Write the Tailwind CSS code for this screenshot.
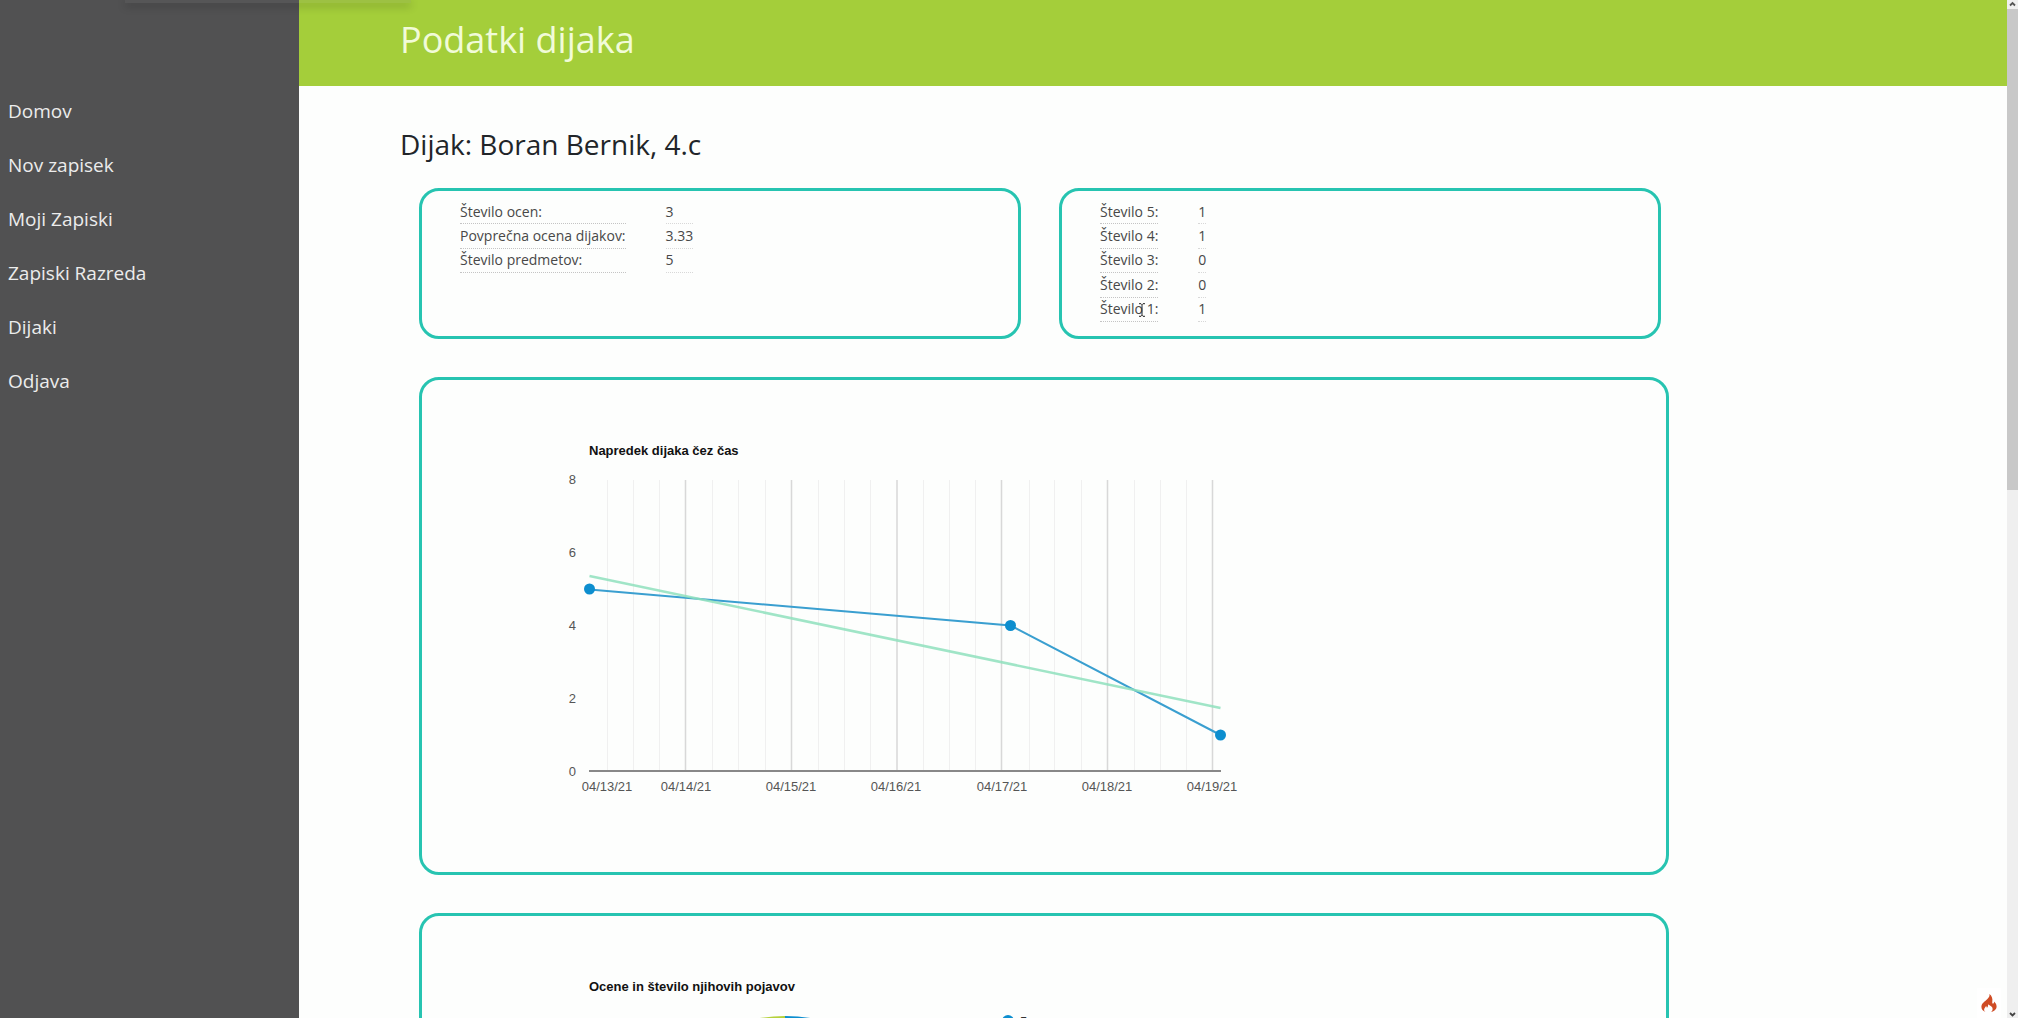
<!DOCTYPE html>
<html lang="sl">
<head>
<meta charset="utf-8">
<title>Podatki dijaka</title>
<script src="https://cdn.jsdelivr.net/npm/@tailwindcss/browser@4"></script>
</head>
<body class="h-screen overflow-hidden bg-[#fdfefd] font-['Open_Sans','Noto_Sans',sans-serif] text-[#212529]">
<div class="relative flex h-full">
  <nav class="w-[299px] shrink-0 bg-[#515152] px-2 pt-[84px] text-[19px] text-[#ececec]" aria-label="Glavni meni">
    <ul>
      <li class="flex h-[54px] items-center"><a href="#">Domov</a></li>
      <li class="flex h-[54px] items-center"><a href="#">Nov zapisek</a></li>
      <li class="flex h-[54px] items-center"><a href="#">Moji Zapiski</a></li>
      <li class="flex h-[54px] items-center"><a href="#">Zapiski Razreda</a></li>
      <li class="flex h-[54px] items-center"><a href="#">Dijaki</a></li>
      <li class="flex h-[54px] items-center"><a href="#">Odjava</a></li>
    </ul>
  </nav>

  <div class="flex min-w-0 flex-1 flex-col overflow-hidden">
    <header class="flex h-[86px] shrink-0 items-center bg-[#a4ce3a] pb-1.5 pl-[101px]">
      <h1 class="text-4xl text-[#f1fbd8]">Podatki dijaka</h1>
    </header>

    <main class="pl-[101px] pt-9">
      <h2 class="text-[28px] leading-[44px]">Dijak: Boran Bernik, 4.c</h2>

      <div class="mr-[338px] ml-[19px] pt-[22px]">
        <div class="mr-2 grid grid-cols-2 gap-[38px] text-sm leading-5 text-[#484848]">
          <section class="h-[151px] rounded-[20px] border-3 border-[#27c4b1] pl-[38px] pt-[9px]">
            <table class="h-[73px] border-separate border-spacing-0 text-left">
              <tr><th class="border-b border-dotted border-[#c4c4c4] p-0 font-normal">Število ocen:</th><td class="w-10 p-0"></td><td class="border-b border-dotted border-[#d8d8d8] p-0">3</td></tr>
              <tr><th class="border-b border-dotted border-[#c4c4c4] p-0 font-normal">Povprečna ocena dijakov:</th><td class="w-10 p-0"></td><td class="border-b border-dotted border-[#d8d8d8] p-0">3.33</td></tr>
              <tr><th class="border-b border-dotted border-[#c4c4c4] p-0 font-normal">Število predmetov:</th><td class="w-10 p-0"></td><td class="border-b border-dotted border-[#d8d8d8] p-0">5</td></tr>
            </table>
          </section>
          <section class="relative h-[151px] rounded-[20px] border-3 border-[#27c4b1] pl-[38px] pt-[9px]">
            <table class="h-[122px] border-separate border-spacing-0 text-left">
              <tr><th class="border-b border-dotted border-[#c4c4c4] p-0 font-normal">Število 5:</th><td class="w-10 p-0"></td><td class="border-b border-dotted border-[#d8d8d8] p-0">1</td></tr>
              <tr><th class="border-b border-dotted border-[#c4c4c4] p-0 font-normal">Število 4:</th><td class="w-10 p-0"></td><td class="border-b border-dotted border-[#d8d8d8] p-0">1</td></tr>
              <tr><th class="border-b border-dotted border-[#c4c4c4] p-0 font-normal">Število 3:</th><td class="w-10 p-0"></td><td class="border-b border-dotted border-[#d8d8d8] p-0">0</td></tr>
              <tr><th class="border-b border-dotted border-[#c4c4c4] p-0 font-normal">Število 2:</th><td class="w-10 p-0"></td><td class="border-b border-dotted border-[#d8d8d8] p-0">0</td></tr>
              <tr><th class="border-b border-dotted border-[#c4c4c4] p-0 font-normal">Število 1:</th><td class="w-10 p-0"></td><td class="border-b border-dotted border-[#d8d8d8] p-0">1</td></tr>
            </table>
            <!-- text cursor -->
            <svg class="absolute left-[76px] top-[112px] h-[14px] w-2" viewBox="0 0 8 14" fill="none" stroke="#222"><path d="M1 .7h2l1 1 1-1h2M4 1.700v11M1 13.300h2l1-1 1 1h2"/></svg>
          </section>
        </div>

        <section class="mt-[38px] h-[498px] rounded-[20px] border-3 border-[#27c4b1] pl-[142px] pt-[61px]">
          <svg class="h-[370px] w-[700px] font-['Liberation_Sans',sans-serif] text-[13px]" viewBox="564 441 700 370" role="img" aria-label="Napredek dijaka čez čas">
            <text x="589" y="455" font-weight="bold" fill="#111">Napredek dijaka čez čas</text>
            <path d="M607.5 480v291M633.5 480v291M659.5 480v291M712.5 480v291M738.5 480v291M765.5 480v291M818.5 480v291M844.5 480v291M870.5 480v291M923.5 480v291M949.5 480v291M975.5 480v291M1029.5 480v291M1054.5 480v291M1081.5 480v291M1134.5 480v291M1160.5 480v291M1186.5 480v291" stroke="#f0f0f0"/>
            <path d="M685.5 480v291M791.5 480v291M897 480v291M1001.5 480v291M1107.5 480v291M1212.5 480v291" stroke="#d8d8d8" stroke-width="1.5"/>
            <path d="M589 771H1221" stroke="#888" stroke-width="2"/>
            <path d="M589.5 589.500L1010.500 625.500L1220.500 735" fill="none" stroke="#3a9fd0" stroke-width="2"/>
            <path d="M589.500 576L1220.500 708" stroke="#8fe0bd" stroke-opacity=".85" stroke-width="2.600"/>
            <g fill="#0d8ecf"><circle cx="589.500" cy="589" r="5.500"/><circle cx="1010.500" cy="625.500" r="5.500"/><circle cx="1220.500" cy="735" r="5.500"/></g>
            <g fill="#555" text-anchor="end"><text x="576" y="484">8</text><text x="576" y="557">6</text><text x="576" y="630">4</text><text x="576" y="703">2</text><text x="576" y="776">0</text></g>
            <g fill="#555" text-anchor="middle"><text x="607" y="791">04/13/21</text><text x="686" y="791">04/14/21</text><text x="791" y="791">04/15/21</text><text x="896" y="791">04/16/21</text><text x="1002" y="791">04/17/21</text><text x="1107" y="791">04/18/21</text><text x="1212" y="791">04/19/21</text></g>
          </svg>
        </section>

        <section class="mt-[38px] h-[498px] rounded-[20px] border-3 border-[#27c4b1] pl-[142px] pt-[61px]">
          <svg class="h-[370px] w-[700px] font-['Liberation_Sans',sans-serif] text-[13px]" viewBox="564 976 700 370" role="img" aria-label="Ocene in število njihovih pojavov">
            <text x="589" y="990" font-weight="bold" fill="#111">Ocene in število njihovih pojavov</text>
            <path d="M785 1175V1015A160 160 0 0 0 625 1175Z" fill="#b5d13c"/>
            <path d="M785 1175V1015A160 160 0 0 1 945 1175Z" fill="#0d8ecf"/>
            <circle cx="1008" cy="1020" r="6" fill="#0d8ecf"/>
            <text x="1020" y="1025" fill="#333">5</text>
          </svg>
        </section>
      </div>
    </main>
  </div>

  <!-- scroll bar -->
  <div class="flex w-[11px] shrink-0 flex-col items-center justify-between bg-[#efefef]" aria-hidden="true">
    <div class="flex w-full flex-col items-center">
      <svg class="h-[9px] w-[7px]" viewBox="0 0 7 9" fill="none" stroke="#555" stroke-width="1.800"><path d="M1 5.500 3.500 3 6 5.500"/></svg>
      <div class="h-[481px] w-full bg-[#c8c8c8]"></div>
    </div>
    <svg class="h-[9px] w-[7px]" viewBox="0 0 7 9" fill="none" stroke="#444" stroke-width="1.800"><path d="M1 4 3.500 6.500 6 4"/></svg>
  </div>

  <div class="absolute left-[125px] top-0 h-[3px] w-[286px] bg-[#777]/15 shadow-[0_3px_8px_rgba(0,0,0,0.3)]"></div>

  <button class="absolute right-[17px] bottom-0 flex h-[30px] w-[24px] items-center justify-center bg-white" aria-label="Razhroščevalnik">
    <svg class="h-[18px] w-4" viewBox="0 0 16 18" fill="#cf4c25"><path d="M8.400 0c.5 2-.5 3.400-2 5C3.500 7.800.4 9.500.4 12.800c0 2.500 1.500 4.300 4 5.200-1.200-1.100-1.600-2.300-1-3.600.4-.9 1.200-1.400 1.600-2.500.7.500 1 1.200.8 2.100.9-.7 1.500-2 1.200-3.500 2 .9 4.600 2 4.600 4.400 0 1.300-.6 2.300-1.600 3.100 3.200-.7 5.600-2.500 5.600-5.500 0-2.300-1.400-3.700-2.500-4.900.1 1-.2 1.800-1 2.200-.9-.4-1-1.300-.8-2.300C11.800 5 11 1.800 8.400 0Z"/></svg>
  </button>
</div>
</body>
</html>
